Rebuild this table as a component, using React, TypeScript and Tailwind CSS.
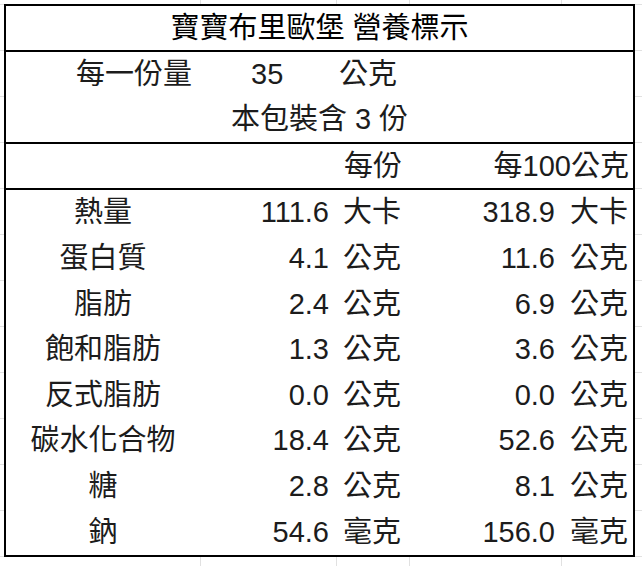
const rows = [
  { name: "熱量", per: "111.6", unit: "大卡", per100: "318.9" },
  { name: "蛋白質", per: "4.1", unit: "公克", per100: "11.6" },
  { name: "脂肪", per: "2.4", unit: "公克", per100: "6.9" },
  { name: "飽和脂肪", per: "1.3", unit: "公克", per100: "3.6" },
  { name: "反式脂肪", per: "0.0", unit: "公克", per100: "0.0" },
  { name: "碳水化合物", per: "18.4", unit: "公克", per100: "52.6" },
  { name: "糖", per: "2.8", unit: "公克", per100: "8.1" },
  { name: "鈉", per: "54.6", unit: "毫克", per100: "156.0" },
]

export default function App() {
  return (
    <div className="h-[566px] w-[642px] overflow-hidden bg-white pl-[4px] pt-[4px] font-['Liberation_Sans','Noto_Sans_CJK_TC',sans-serif] text-[29px] leading-none text-[#1c1c1c] [background-image:linear-gradient(to_right,transparent_200px,#e1e1e1_200px,#e1e1e1_201px,transparent_201px,transparent_336px,#e1e1e1_336px,#e1e1e1_337px,transparent_337px,transparent_409px,#e1e1e1_409px,#e1e1e1_410px,transparent_410px,transparent_561px,#e1e1e1_561px,#e1e1e1_562px,transparent_562px),repeating-linear-gradient(to_bottom,#e1e1e1_0px,#e1e1e1_1px,transparent_1px,transparent_46px)] [background-position:0_0,0_4px]">
      <div className="flex h-[553px] w-[631px] flex-col border-2 border-black bg-white">
        <div className="flex h-[46px] shrink-0 items-center justify-center border-b-2 border-black text-black">
          寶寶布里歐堡 營養標示
        </div>

        <div className="flex h-[92px] shrink-0 flex-col border-b-2 border-black">
          <div className="flex h-[45px] items-center">
            <span className="ml-[70px] w-[175px]">每一份量</span>
            <span className="w-[88px]">35</span>
            <span>公克</span>
          </div>
          <div className="flex h-[45px] items-center justify-center">本包裝含 3 份</div>
        </div>

        <div className="grid h-[46px] shrink-0 grid-cols-[194px_202px_227px] items-center border-b-2 border-black">
          <span />
          <span className="text-right">每份</span>
          <span className="text-right">每100公克</span>
        </div>

        <div className="grid flex-1 grid-rows-8">
          {rows.map((r) => (
            <div key={r.name} className="grid grid-cols-[194px_136px_74px_151px_72px] items-center">
              <span className="text-center">{r.name}</span>
              <span className="pr-[7px] text-right">{r.per}</span>
              <span className="pl-[7px]">{r.unit}</span>
              <span className="pr-[6px] text-right">{r.per100}</span>
              <span className="pl-[9px]">{r.unit}</span>
            </div>
          ))}
        </div>
      </div>
    </div>
  )
}
